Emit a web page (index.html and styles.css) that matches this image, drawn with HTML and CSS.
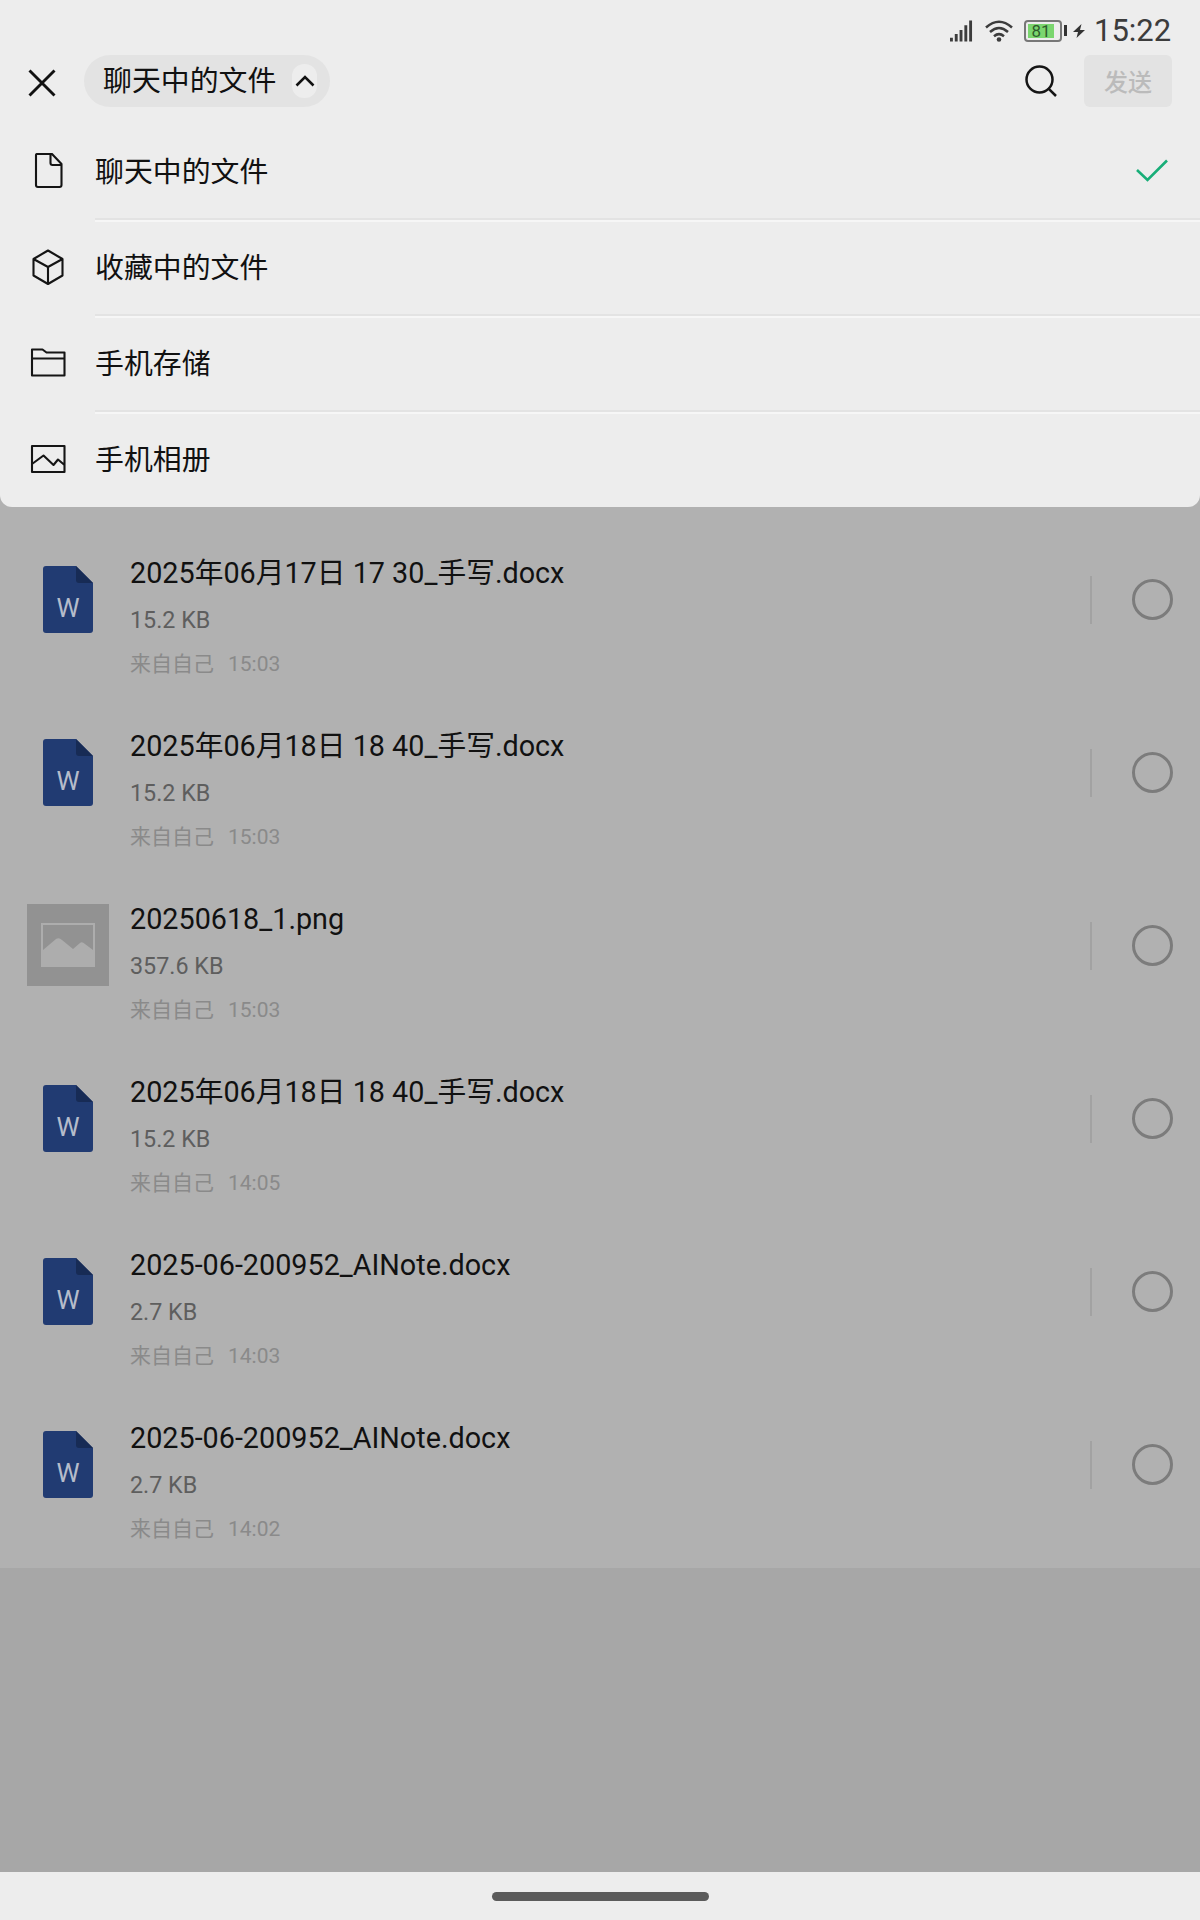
FILE: index.html
```
<!DOCTYPE html>
<html lang="zh-CN">
<head>
<meta charset="utf-8">
<title>聊天中的文件</title>
<link rel="stylesheet" href="styles.css">
</head>
<body>
<svg class="symbols" width="0" height="0">
  <symbol id="word" viewBox="0 0 50 67">
    <path d="M3 0H33L50 17V64a3 3 0 0 1-3 3H3a3 3 0 0 1-3-3V3a3 3 0 0 1 3-3z" fill="#213b72"/>
    <path d="M33 0L50 17H36a3 3 0 0 1-3-3z" fill="#172b55"/>
  </symbol>
</svg>
<section class="panel">
  <div class="status">
    <svg class="signal" width="23" height="22" viewBox="0 0 24 22" fill="#3c3c3c"><path d="M0 18h3v4H0zM5 14h3v8H5zM10 10h3v12h-3zM15 5h3v17h-3zM20 0h3v22h-3z"/></svg>
    <svg class="wifi" width="28" height="22" viewBox="0 0 28 22" fill="none" stroke="#3c3c3c" stroke-width="2.5"><path d="M1 7.5Q14-4 27 7.5M5 12Q14 4 23 12M9 16.200Q14 12 19 16.200"/><circle cx="14" cy="19.500" r="2.300" fill="#3c3c3c" stroke="none"/></svg>
    <div class="battery"><span>81</span></div><i class="tip"></i>
    <svg class="bolt" width="12" height="14" viewBox="0 0 12 14"><path d="M8.500 0L0 8H5L3.500 14L12 6H7z" fill="#333"/></svg>
    <time>15:22</time>
  </div>
  <header class="toolbar">
    <svg class="close" width="28" height="28" viewBox="0 0 28 28" fill="none" stroke="#111" stroke-width="2.900"><path d="M1.500 1.500L26.500 26.500M26.500 1.500L1.500 26.500"/></svg>
    <div class="pill"><span>聊天中的文件</span><b><svg width="20" height="12" viewBox="0 0 20 12" fill="none" stroke="#111" stroke-width="2.600"><path d="M1.500 10.500L10 2L18.500 10.500"/></svg></b></div>
    <svg class="search" width="33" height="33" viewBox="0 0 33 33" fill="none" stroke="#151515" stroke-width="2.500"><circle cx="14.500" cy="14.500" r="13"/><path d="M23.800 23.800L31 31"/></svg>
    <div class="send">发送</div>
  </header>
  <nav class="menu">
    <div class="item"><svg class="icon" width="36" height="36" viewBox="0 0 36 36"><path d="M7 1H22L31.500 11V32a2 2 0 0 1-2 2H8a2 2 0 0 1-2-2V2a1 1 0 0 1 1-1zM20.500 1V10a2 2 0 0 0 2 2H31.500"/></svg><div class="label">聊天中的文件<svg class="check" width="32" height="24" viewBox="0 0 32 24"><path d="M1 11L11.500 21L31 1.500"/></svg></div></div>
    <div class="item"><svg class="icon" width="36" height="36" viewBox="0 0 36 36"><path d="M18 1.500L32.500 10V26.500L18 35L3.500 26.500V10zM3.500 10L18 18L32.500 10M18 18V35"/></svg><div class="label">收藏中的文件</div></div>
    <div class="item"><svg class="icon" width="36" height="36" viewBox="0 0 36 36"><path d="M2 4.500H12.500L16.500 7.500H34.500V30.500H2V4.500zM2 13.500H34.500"/></svg><div class="label">手机存储</div></div>
    <div class="item"><svg class="icon" width="36" height="36" viewBox="0 0 36 36"><path d="M2 5H34.500V31H2zM2 23L13.500 14.500L23.500 24L28 18.500L34.500 24"/></svg><div class="label">手机相册</div></div>
  </nav>
</section>
<main class="files">
  <article class="file"><div class="thumb word"><svg width="50" height="67"><use href="#word"/></svg><b>W</b></div><div class="info"><h2>2025年06月17日 17 30_手写.docx</h2><p class="size">15.2 KB</p><p class="from"><span>来自自己</span><span>15:03</span></p></div><i class="rule"></i><i class="radio"></i></article>
  <article class="file"><div class="thumb word"><svg width="50" height="67"><use href="#word"/></svg><b>W</b></div><div class="info"><h2>2025年06月18日 18 40_手写.docx</h2><p class="size">15.2 KB</p><p class="from"><span>来自自己</span><span>15:03</span></p></div><i class="rule"></i><i class="radio"></i></article>
  <article class="file"><div class="thumb photo"><svg width="54" height="46" viewBox="0 0 54 46"><path d="M1 2H53V44H1z" fill="none" stroke="#adadad" stroke-width="2"/><path d="M2 28L15 17Q18 15 21 18L32 27L39 21Q41 19 44 22L52 28V43H2z" fill="#adadad"/></svg></div><div class="info"><h2>20250618_1.png</h2><p class="size">357.6 KB</p><p class="from"><span>来自自己</span><span>15:03</span></p></div><i class="rule"></i><i class="radio"></i></article>
  <article class="file"><div class="thumb word"><svg width="50" height="67"><use href="#word"/></svg><b>W</b></div><div class="info"><h2>2025年06月18日 18 40_手写.docx</h2><p class="size">15.2 KB</p><p class="from"><span>来自自己</span><span>14:05</span></p></div><i class="rule"></i><i class="radio"></i></article>
  <article class="file"><div class="thumb word"><svg width="50" height="67"><use href="#word"/></svg><b>W</b></div><div class="info"><h2>2025-06-200952_AINote.docx</h2><p class="size">2.7 KB</p><p class="from"><span>来自自己</span><span>14:03</span></p></div><i class="rule"></i><i class="radio"></i></article>
  <article class="file"><div class="thumb word"><svg width="50" height="67"><use href="#word"/></svg><b>W</b></div><div class="info"><h2>2025-06-200952_AINote.docx</h2><p class="size">2.7 KB</p><p class="from"><span>来自自己</span><span>14:02</span></p></div><i class="rule"></i><i class="radio"></i></article>
</main>
<footer class="navbar"><i></i></footer>
</body>
</html>
```
FILE: styles.css
```
* { box-sizing: border-box; }
body {
  margin: 0;
  width: 1200px;
  height: 1920px;
  display: flex;
  flex-direction: column;
  overflow: hidden;
  background: #a7a7a7;
  color: #111;
  font-family: Roboto, "Noto Sans CJK SC", sans-serif;
}
svg { display: block; flex: none; }
.symbols { position: absolute; }
h2, p { margin: 0; font-weight: 400; white-space: nowrap; }

.panel {
  height: 507px;
  flex: none;
  background: #ededed;
  border-radius: 0 0 12px 12px;
  z-index: 1;
}
.status {
  height: 50px;
  padding: 11px 28px 0 950px;
  display: flex;
  align-items: center;
  color: #3c3c3c;
}
.wifi { margin-left: 12px; }
.battery {
  width: 38px;
  height: 22px;
  margin-left: 11px;
  padding: 2px 6px 2px 2px;
  border: 2px solid #777;
  border-radius: 4px;
  flex: none;
}
.battery span {
  display: block;
  height: 14px;
  background: #7bd66f;
  color: #2e5c2b;
  font-size: 17px;
  line-height: 15px;
  text-align: center;
}
.tip { width: 3px; height: 11px; margin-left: 2px; background: #333; flex: none; }
.bolt { margin-left: 6px; }
.status time { margin-left: 9px; font-size: 31px; line-height: 40px; }

.toolbar { height: 74px; display: flex; align-items: flex-start; padding: 5px 28px 0 28px; }
.close { margin-top: 14px; }
.pill {
  height: 52px;
  width: 246px;
  margin-left: 28px;
  padding-left: 19px;
  display: flex;
  align-items: center;
  border-radius: 26px;
  background: #e3e3e3;
  font-size: 28.9px;
  line-height: 54px;
}
.pill b {
  width: 25px;
  height: 34px;
  margin-left: 16px;
  display: flex;
  align-items: center;
  justify-content: center;
  border-radius: 12px;
  background: #ededed;
}
.search { margin: 10px 0 0 695px; }
.send {
  width: 88px;
  height: 52px;
  margin-left: auto;
  border-radius: 6px;
  background: #e3e3e3;
  color: #bbb;
  font-size: 24px;
  font-weight: 500;
  line-height: 57px;
  text-align: center;
}

.item { height: 96px; display: flex; align-items: center; padding-left: 30px; }
.icon { margin-bottom: 2px; fill: none; stroke: #151515; stroke-width: 2.1; stroke-linejoin: round; }
.label {
  flex: 1;
  height: 96px;
  margin-left: 29px;
  padding: 0 32px 4px 0;
  display: flex;
  align-items: center;
  justify-content: space-between;
  border-bottom: 2px solid #e3e3e3;
  box-shadow: 0 2px 0 #f6f6f6;
  font-size: 28.9px;
}
.item:last-child .label { border-color: transparent; box-shadow: none; }
.check { margin-top: 4px; fill: none; stroke: #18ae78; stroke-width: 2.6; }

.files { height: 1084px; margin-top: -23px; padding-top: 46px; background: #b1b1b1; flex: none; }
.file { height: 173px; display: flex; padding: 22px 27px 0; }
.thumb { width: 82px; height: 82px; margin-top: 6px; display: grid; place-items: center; flex: none; }
.thumb > * { grid-area: 1 / 1; }
.word b { margin-top: 18px; color: #b5bccb; font-size: 26px; font-weight: 400; line-height: 28px; }
.photo { background: #929292; }
.info { flex: 1; margin-left: 21px; }
.info h2 { height: 44px; font-size: 28.75px; line-height: 43px; }
.size { height: 45px; color: #5e5e5e; font-size: 23.3px; line-height: 48px; }
.from { display: flex; gap: 14px; color: #8a8a8a; font-size: 21px; line-height: 46px; }
.rule { width: 2px; height: 48px; margin-top: 24px; background: #a2a2a2; }
.radio { width: 41px; height: 41px; margin: 27px 0 0 40px; border: 3px solid #7c7c7c; border-radius: 50%; }

.navbar {
  height: 48px;
  margin-top: auto;
  flex: none;
  display: flex;
  align-items: center;
  justify-content: center;
  background: #ededed;
}
.navbar i { width: 217px; height: 9px; border-radius: 5px; background: #5b5b5b; }
```
